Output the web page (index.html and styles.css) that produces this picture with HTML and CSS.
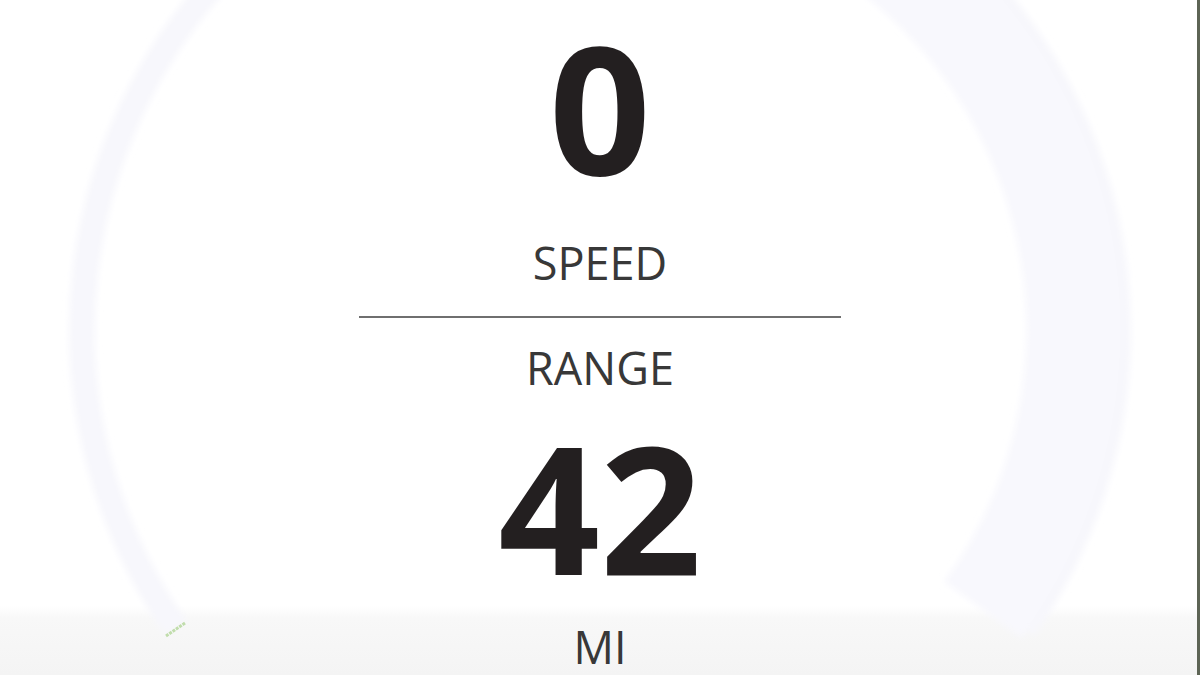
FILE: index.html
```html
<!DOCTYPE html>
<html lang="en">
<head>
    <meta charset="UTF-8">
    <meta name="viewport" content="width=device-width, initial-scale=1.0">
    <title>Dashboard</title>
    <link rel="stylesheet" href="styles.css">
</head>
<body>
    <div class="dash">
        <!-- gauge track sits behind the readout, centre (600, 330) -->
        <svg class="gauge" width="1200" height="675" viewBox="0 0 1200 675">
            <defs>
                <filter id="soft" x="-10%" y="-10%" width="120%" height="120%">
                    <feGaussianBlur stdDeviation="3"/>
                </filter>
            </defs>
            <g filter="url(#soft)">
                <path d="M176 628 A518 518 0 1 1 1024 628" fill="none" stroke="#f7f7fc" stroke-width="26"/>
                <path d="M762 -116 A475 475 0 0 1 983 610" fill="none" stroke="#f8f8fd" stroke-width="96"/>
            </g>
            <line x1="166" y1="636" x2="185" y2="623" stroke="#b4d79a" stroke-width="3" stroke-dasharray="3 1" opacity="0.8"/>
        </svg>
        <div class="readout">
            <div class="value speed-value">0</div>
            <div class="label speed-label">SPEED</div>
            <div class="divider"></div>
            <div class="label range-label">RANGE</div>
            <div class="value range-value">42</div>
            <div class="label unit">MI</div>
        </div>
        <div class="edge"></div>
    </div>
</body>
</html>
```

FILE: styles.css
```css
/* Basic styling */
body {
    margin: 0;
    font-family: "Open Sans", "Liberation Sans", sans-serif;
    background: #fff;
}
.dash {
    position: relative;
    width: 1200px;
    height: 675px;
    overflow: hidden;
    background: linear-gradient(to bottom, #fff 0, #fff 606px, #f8f8f8 618px, #f4f4f4 675px);
}
.gauge {
    position: absolute;
    top: 0;
    left: 0;
}
.readout {
    position: relative;
    display: flex;
    flex-direction: column;
    align-items: center;
    padding-top: 17px;
}
.value {
    font-size: 178px;
    line-height: 178px;
    font-weight: 700;
    color: #231f20;
}
.label {
    font-size: 45px;
    line-height: 45px;
    color: #383838;
}
.speed-label {
    margin-top: 45px;
}
.divider {
    width: 482px;
    height: 2px;
    margin-top: 31px;
    background: #6f6f6f;
}
.range-label {
    margin-top: 27px;
}
.range-value {
    margin-top: 27px;
}
.unit {
    margin-top: 29px;
}
.edge {
    position: absolute;
    top: 0;
    right: 0;
    width: 3px;
    height: 100%;
    background: #5d6455;
}
```
